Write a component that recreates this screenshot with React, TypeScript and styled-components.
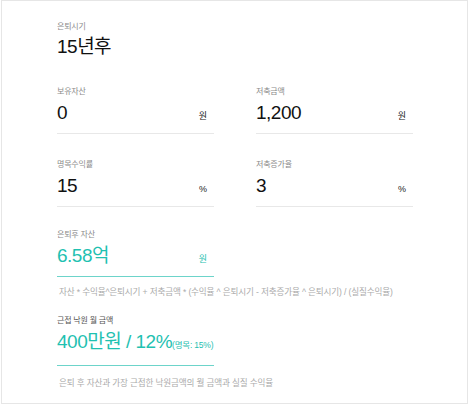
import React from 'react'
import styled, { createGlobalStyle } from "styled-components";

const GlobalStyle = createGlobalStyle`
  html, body {
    margin: 0;
    padding: 0;
    background: #fff;
  }
  body {
    font-family: "Liberation Sans", "Noto Sans CJK KR", sans-serif;
  }
`;

const TEAL = "#1fc1b1";

const Card = styled.div`
  box-sizing: border-box;
  width: 467px;
  height: 404px;
  margin-left: 1px;
  border: 1px solid #e6e6e6;
  padding: 20px 0 0 55px;
  background: #fff;
`;

const Label = styled.div<{ $dark?: boolean }>`
  font-size: 8px;
  line-height: 12px;
  letter-spacing: -0.2px;
  color: ${(p) => (p.$dark ? "#555" : "#8a8a8a")};
`;

const HeroValue = styled.div`
  margin-top: 2px;
  font-size: 19px;
  line-height: 24px;
  letter-spacing: -0.5px;
  color: #111;
`;

const Grid = styled.div`
  display: grid;
  grid-template-columns: 157px 157px;
  column-gap: 42px;
  row-gap: 25px;
  margin-top: 27px;
`;

const Field = styled.div<{ $top?: number }>`
  width: 157px;
  margin-top: ${(p) => p.$top ?? 0}px;
`;

const ValueRow = styled.div<{ $accent?: boolean }>`
  display: flex;
  align-items: baseline;
  justify-content: space-between;
  margin-top: 3px;
  padding-bottom: 8px;
  border-bottom: 1px solid ${(p) => (p.$accent ? "#6dd4ca" : "#e8e8e8")};
`;

const Value = styled.span<{ $accent?: boolean }>`
  font-size: 19px;
  line-height: 24px;
  letter-spacing: -0.5px;
  color: ${(p) => (p.$accent ? TEAL : "#111")};
  white-space: nowrap;
`;

const Small = styled.span`
  font-size: 8.5px;
  letter-spacing: -0.2px;
  color: ${TEAL};
`;

const Unit = styled.span<{ $accent?: boolean }>`
  margin-right: 7px;
  font-size: 9px;
  color: ${(p) => (p.$accent ? TEAL : "#222")};
`;

const Note = styled.div<{ $top: number }>`
  margin-top: ${(p) => p.$top}px;
  padding-left: 2px;
  font-size: 8.6px;
  line-height: 12px;
  letter-spacing: -0.15px;
  color: #ababab;
  white-space: nowrap;
`;

type InputProps = {
  label: string;
  value: string;
  unit: string;
};

const InputField = ({ label, value, unit }: InputProps) => (
  <Field>
    <Label>{label}</Label>
    <ValueRow>
      <Value>{value}</Value>
      <Unit>{unit}</Unit>
    </ValueRow>
  </Field>
);

const App = () => {
  const inputs: InputProps[] = [
    { label: "보유자산", value: "0", unit: "원" },
    { label: "저축금액", value: "1,200", unit: "원" },
    { label: "명목수익률", value: "15", unit: "%" },
    { label: "저축증가율", value: "3", unit: "%" },
  ];

  return (
    <>
      <GlobalStyle />
      <Card>
        <Label>은퇴시기</Label>
        <HeroValue>15년후</HeroValue>

        <Grid>
          {inputs.map((item) => (
            <InputField key={item.label} {...item} />
          ))}
        </Grid>

        <Field $top={22}>
          <Label>은퇴후 자산</Label>
          <ValueRow $accent>
            <Value $accent>6.58억</Value>
            <Unit $accent>원</Unit>
          </ValueRow>
        </Field>
        <Note $top={9}>
          자산 * 수익율^은퇴시기 + 저축금액 * (수익율 ^ 은퇴시기 - 저축증가율 ^ 은퇴시기) / (실질수익율)
        </Note>

        <Field $top={17}>
          <Label $dark>근접 낙원 월 금액</Label>
          <ValueRow $accent>
            <Value $accent>
              400만원 / 12%<Small>(명목: 15%)</Small>
            </Value>
          </ValueRow>
        </Field>
        <Note $top={11}>은퇴 후 자산과 가장 근접한 낙원금액의 월 금액과 실질 수익율</Note>
      </Card>
    </>
  );
};

export default App
